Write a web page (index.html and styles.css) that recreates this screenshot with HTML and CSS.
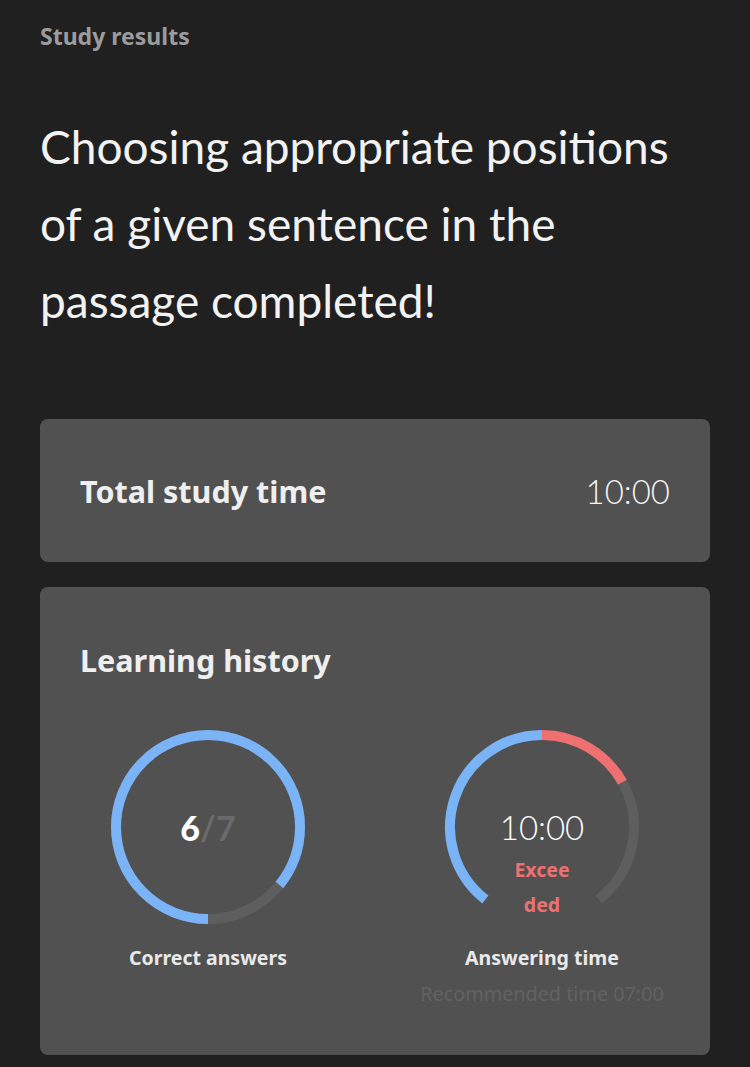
FILE: index.html
```html
<!DOCTYPE html>
<html lang="en">
  <head>
    <meta charset="UTF-8" />
    <title>Study results</title>
    <link rel="stylesheet" href="styles.css">
  </head>
  <body>
    <div class="page">
      <div class="eyebrow">Study results</div>
      <h1 class="headline">Choosing appropriate positions of a given sentence in the passage completed!</h1>

      <div class="card card-row">
        <span class="card-title">Total study time</span>
        <span class="total-time">10:00</span>
      </div>

      <div class="card history">
        <div class="card-title">Learning history</div>
        <div class="charts">
          <div class="chart">
            <div class="ring">
              <svg width="200" height="200" viewBox="0 0 200 200">
                <!-- track + 6/7 progress, starting at the bottom -->
                <circle cx="100" cy="100" r="92" fill="none" stroke="#5e5e5e" stroke-width="10" />
                <circle cx="100" cy="100" r="92" fill="none" stroke="#7ab3f6" stroke-width="10"
                  stroke-dasharray="495.5 578.05" transform="rotate(90 100 100)" />
              </svg>
              <div class="ring-label score"><b>6</b><span>/7</span></div>
            </div>
            <div class="chart-name">Correct answers</div>
          </div>
          <div class="chart">
            <div class="ring">
              <svg width="200" height="200" viewBox="0 0 200 200">
                <!-- gauge from -142deg to 142deg -->
                <path d="M 43.36 172.5 A 92 92 0 0 1 100 8" fill="none" stroke="#7ab3f6" stroke-width="10" />
                <path d="M 100 8 A 92 92 0 0 1 180.48 55.4" fill="none" stroke="#ee7070" stroke-width="10" />
                <path d="M 180.48 55.4 A 92 92 0 0 1 156.64 172.5" fill="none" stroke="#5e5e5e" stroke-width="10" />
              </svg>
              <div class="ring-label timer">
                <div class="clock">10:00</div>
                <div class="over">Exceeded</div>
              </div>
            </div>
            <div class="chart-name">Answering time</div>
            <div class="hint">Recommended time 07:00</div>
          </div>
        </div>
      </div>
    </div>
  </body>
</html>
```

FILE: styles.css
```css
body {
  margin: 0;
  background-color: #202020;
  font-family: Lato, "Noto Sans", sans-serif;
  color: #f0f0f0;
}
.page {
  padding: 21px 40px 12px;
}
.eyebrow {
  font-family: "Noto Sans", sans-serif;
  font-size: 23px;
  font-weight: bold;
  color: #9c9c9c;
  line-height: 30px;
}
.headline {
  margin: 57px 0 0;
  font-size: 46px;
  font-weight: normal;
  line-height: 77px;
  color: #f2f2f2;
  padding-right: 20px;
}
.card {
  background-color: #515151;
  border-radius: 8px;
  padding: 0 40px;
}
.card-row {
  margin-top: 80px;
  height: 143px;
  display: flex;
  align-items: center;
  justify-content: space-between;
}
.card-title {
  font-family: "Noto Sans", sans-serif;
  font-size: 30.5px;
  font-weight: bold;
  line-height: 40px;
  color: #efefef;
}
.total-time {
  font-size: 33px;
  font-weight: 300;
  color: #f4f4f4;
}
.history {
  margin-top: 25px;
  padding-top: 53px;
  padding-bottom: 48px;
}
.charts {
  display: flex;
  justify-content: center;
  gap: 94px;
  margin-top: 47px;
}
.chart {
  width: 240px;
  display: flex;
  flex-direction: column;
  align-items: center;
}
.ring {
  position: relative;
  width: 200px;
  height: 200px;
}
.ring svg {
  display: block;
}
.ring-label {
  position: absolute;
  top: 0;
  left: 0;
  right: 0;
  bottom: 0;
  display: flex;
  flex-direction: column;
  align-items: center;
  justify-content: center;
}
.score {
  flex-direction: row;
  font-size: 34px;
  font-weight: bold;
}
.score b {
  color: #ffffff;
}
.score span {
  color: #6a6a6a;
}
.timer {
  justify-content: flex-start;
  padding-top: 80px;
}
.clock {
  font-size: 33px;
  font-weight: 300;
  line-height: 40px;
  color: #ffffff;
}
.over {
  margin-top: 5px;
  width: 58px;
  word-break: break-all;
  text-align: center;
  font-family: "Noto Sans", sans-serif;
  font-size: 19.5px;
  font-weight: bold;
  color: #ee7070;
  line-height: 35px;
}
.chart-name {
  margin-top: 18px;
  font-family: "Noto Sans", sans-serif;
  font-size: 19.5px;
  font-weight: bold;
  line-height: 26px;
  color: #e9e9e9;
}
.hint {
  margin-top: 10px;
  font-family: "Noto Sans", sans-serif;
  font-size: 19.8px;
  line-height: 26px;
  white-space: nowrap;
  color: #626262;
}
```
